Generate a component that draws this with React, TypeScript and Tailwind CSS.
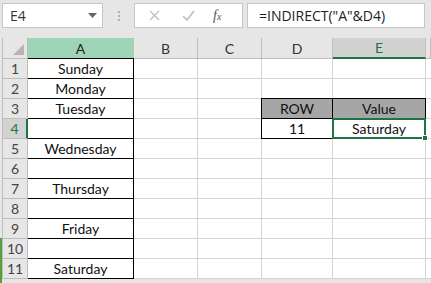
const rows: { a: string; d?: string; e?: string; head?: boolean }[] = [
  { a: 'Sunday' },
  { a: 'Monday' },
  { a: 'Tuesday', d: 'ROW', e: 'Value', head: true },
  { a: '', d: '11', e: 'Saturday' },
  { a: 'Wednesday' },
  { a: '' },
  { a: 'Thursday' },
  { a: '' },
  { a: 'Friday' },
  { a: '' },
  { a: 'Saturday' },
];

const cols = ['A', 'B', 'C', 'D', 'E', ''];

const App = () => {
  return (
    <div className="w-[431px] h-[283px] overflow-hidden bg-[#e6e6e6] relative" style={{ fontFamily: 'Lato, "Open Sans", sans-serif' }}>
      {/* formula bar */}
      <div className="flex items-center h-[38px] pb-[10px] pt-[3px]">
        <div className="ml-[2px] w-[101px] h-[25px] bg-white border border-[#c6c6c6] flex items-center justify-between pl-[7px] pr-[5px]">
          <span className="text-[14px] text-[#333]" style={{ fontFamily: '"Open Sans", sans-serif' }}>E4</span>
          <svg width="9" height="5" viewBox="0 0 9 5"><path d="M0 0h9L4.5 5z" fill="#666" /></svg>
        </div>
        <div className="w-[31px] flex flex-col items-center gap-[2px]">
          <div className="w-[2px] h-[2px] bg-[#b0b0b0]" />
          <div className="w-[2px] h-[2px] bg-[#b0b0b0]" />
          <div className="w-[2px] h-[2px] bg-[#b0b0b0]" />
        </div>
        <div className="w-[109px] h-[25px] bg-white border border-[#c6c6c6] flex items-center">
          <svg className="ml-[14px]" width="11" height="11" viewBox="0 0 11 11"><path d="M1 1l9 9M10 1l-9 9" stroke="#bdbdbd" strokeWidth="1.3" /></svg>
          <svg className="ml-[22px]" width="13" height="11" viewBox="0 0 13 11"><path d="M1 6l4 4 7-9" stroke="#bdbdbd" strokeWidth="1.6" fill="none" /></svg>
          <span className="ml-[18px] text-[14px] italic text-[#555]" style={{ fontFamily: '"Liberation Serif", serif' }}>f<span className="text-[10px]">x</span></span>
        </div>
        <div className="ml-[4px] w-[178px] h-[25px] bg-white border border-[#c6c6c6] flex items-center pl-[11px]">
          <span className="text-[14px] text-[#222]" style={{ fontFamily: '"Open Sans", sans-serif' }}>=INDIRECT("A"&amp;D4)</span>
        </div>
      </div>

      {/* grid */}
      <div className="ml-[2px] border-l border-[#bdbdbd] bg-white grid grid-cols-[25px_106px_64px_64px_71px_93px_1fr] text-[14px] text-[#111]">
        <div className="h-[21px] bg-[#e6e6e6] border-r border-b border-[#bdbdbd] relative overflow-hidden">
          <svg className="absolute right-[3px] bottom-[3px]" width="11" height="11" viewBox="0 0 11 11"><path d="M11 0v11H0z" fill="#b4b4b4" /></svg>
        </div>
        {cols.map((c) => (
          <div
            key={c || 'f'}
            className={
              c === 'A'
                ? 'h-[21px] bg-[#9fd5b7] border-r border-b border-[#9fd5b7] flex items-center justify-center text-[#222]'
                : c === 'E'
                  ? 'h-[21px] bg-[#d2d2d2] border-r border-b-2 border-r-[#bdbdbd] border-b-[#217346] flex items-center justify-center text-[#217346]'
                  : 'h-[21px] bg-[#e6e6e6] border-r border-b border-[#bdbdbd] flex items-center justify-center text-[#333]'
            }
          >
            {c}
          </div>
        ))}
        {rows.map((r, i) => {
          const n = i + 1;
          return [
            <div
              key={`h${n}`}
              className={
                n === 4
                  ? 'h-[20px] bg-[#d2d2d2] border-b border-r-2 border-b-[#bdbdbd] border-r-[#217346] flex items-center justify-center text-[#217346]'
                  : 'h-[20px] bg-[#e6e6e6] border-b border-r border-[#bdbdbd] flex items-center justify-center text-[#444]'
              }
            >
              {n}
            </div>,
            <div key={`a${n}`} className={`h-[20px] border-r border-b border-black flex items-center justify-center ${n === 1 ? 'border-t -mt-px h-[21px]' : ''}`}>
              {r.a}
            </div>,
            <div key={`b${n}`} className="h-[20px] border-r border-b border-[#d4d4d4]" />,
            <div key={`c${n}`} className="h-[20px] border-r border-b border-[#d4d4d4]" />,
            r.d ? (
              <div
                key={`d${n}`}
                className={`h-[20px] border-b border-r border-l border-black -ml-px flex items-center justify-center ${r.head ? 'bg-[#a6a6a6] border-t -mt-px h-[21px]' : ''}`}
              >
                {r.d}
              </div>
            ) : (
              <div key={`d${n}`} className="h-[20px] border-r border-b border-[#d4d4d4]" />
            ),
            r.e ? (
              n === 4 ? (
                <div key={`e${n}`} className="h-[21px] -mt-px -ml-px border-2 border-[#217346] flex items-center justify-center relative z-10">
                  {r.e}
                  <div className="absolute -right-[4px] -bottom-[4px] w-[6px] h-[6px] bg-[#217346] border border-white" />
                </div>
              ) : (
                <div key={`e${n}`} className="h-[21px] -mt-px border border-l-0 border-black bg-[#a6a6a6] flex items-center justify-center">
                  {r.e}
                </div>
              )
            ) : (
              <div key={`e${n}`} className="h-[20px] border-r border-b border-[#d4d4d4]" />
            ),
            <div key={`f${n}`} className="h-[20px] border-b border-[#d4d4d4]" />,
          ];
        })}
      </div>
      {/* green edge strip at left */}
      <div className="absolute left-0 top-[238px] w-[2px] h-[45px] bg-[#5a9e3a]" />
    </div>
  );
};

export default App;
